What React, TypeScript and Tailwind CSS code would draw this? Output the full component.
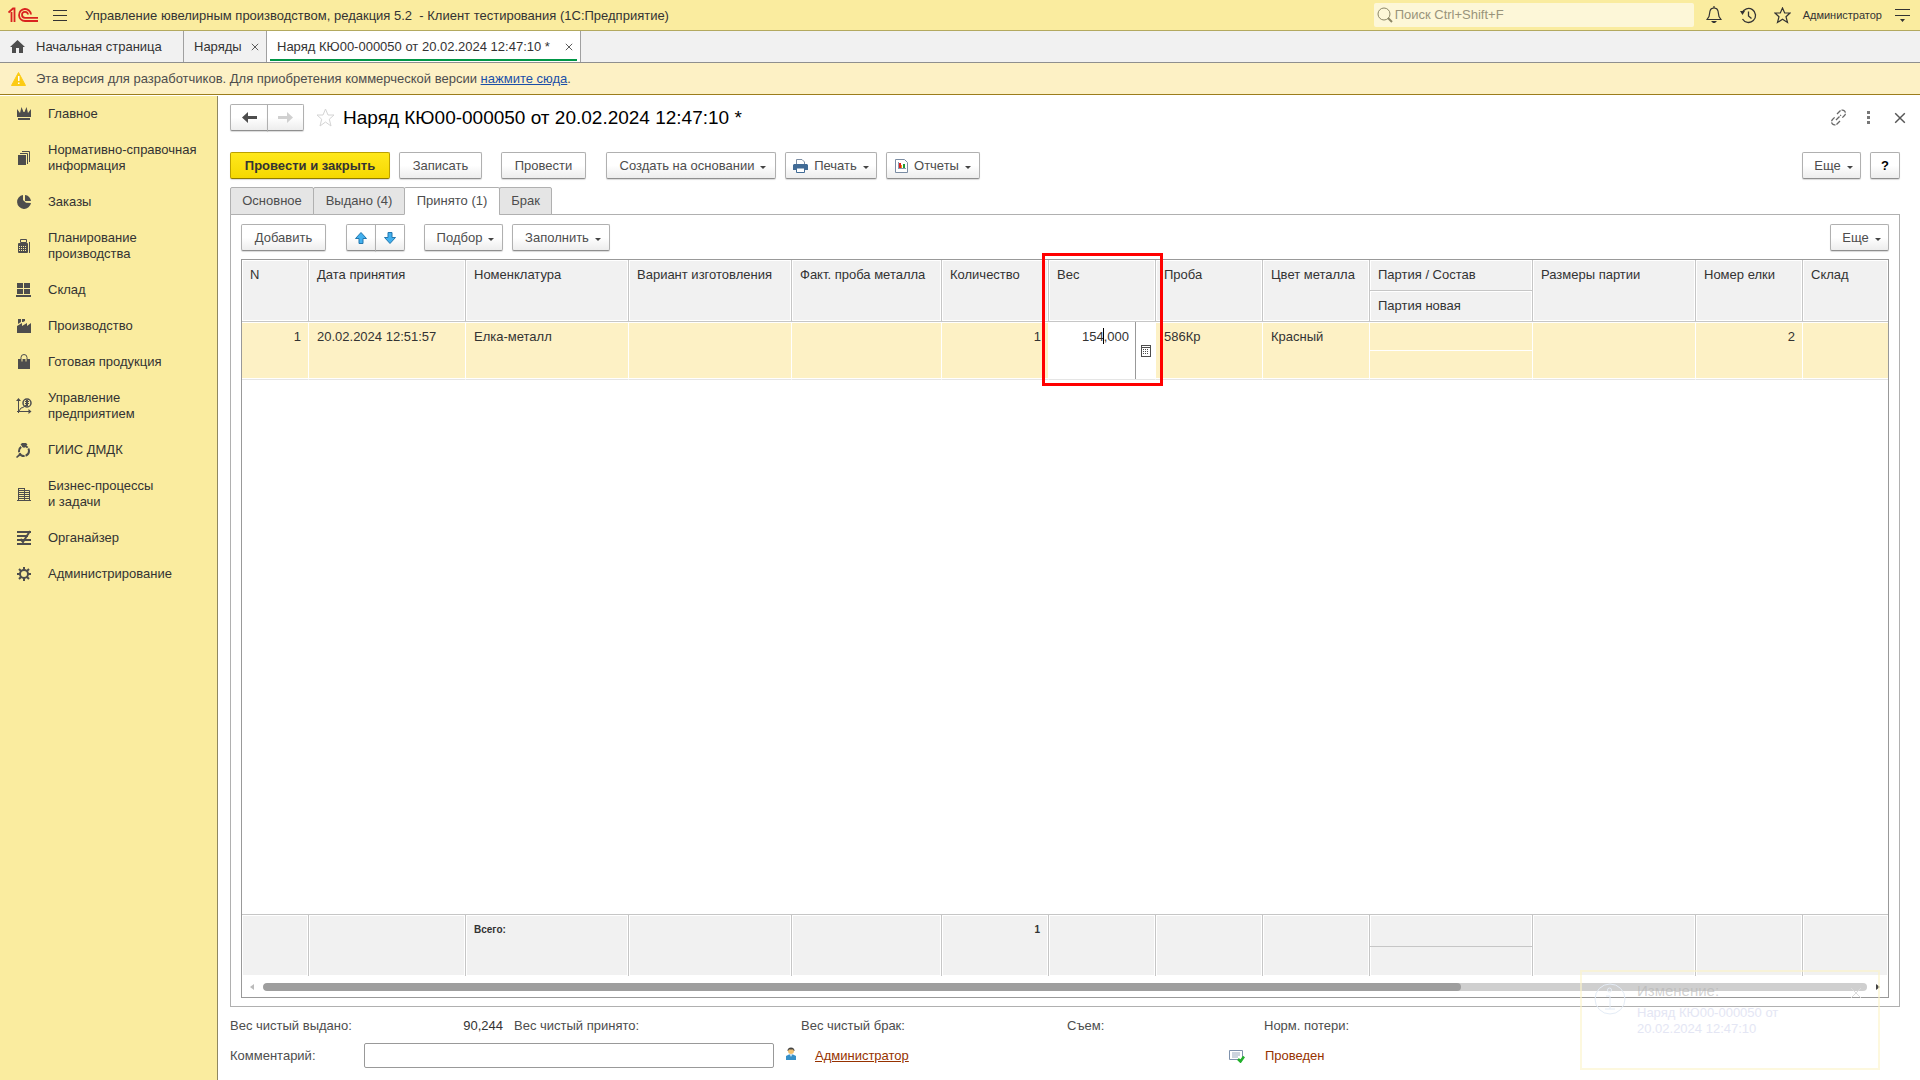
import React, { useState } from 'react';
import clsx from 'clsx';

interface SectionItem {
  label: string;
  icon: React.ReactNode;
}

const sections: SectionItem[] = [
  {
    label: 'Главное',
    icon: <path d="M1 3l3 4 1.500-6 2 5h1l2-5L12 7l3-4v8H1zM2 12h12v2H2z" />,
  },
  {
    label: 'Нормативно-справочная\nинформация',
    icon: (
      <>
        <path d="M2 5h8v10H2z" />
        <path d="M4 3.500h7.500V14M6 1.500h7.500V12" fill="none" stroke="currentColor" />
      </>
    ),
  },
  {
    label: 'Заказы',
    icon: (
      <>
        <path d="M7 1a7 7 0 1 0 8 8l-5-.2L7 6z" />
        <path d="M9 1a6.500 6.500 0 0 1 6 6H9z" />
      </>
    ),
  },
  {
    label: 'Планирование\nпроизводства',
    icon: (
      <>
        <path d="M4.500 1.500h6v3h-6zM2.500 5.500h9v9h-9z" fill="none" stroke="currentColor" />
        <path d="M3 6h8v2H3zM3 9h8v1H3zM3 11h8v1H3zM3 13h8v1H3zM4 7h1v7H4zM6 7h1v7H6zM8 7h1v7H8zM10 7h1v7h-1zM13 4h1v11h-1z" />
      </>
    ),
  },
  {
    label: 'Склад',
    icon: <path d="M1 1h6v5H1zM8 1h6v5H8zM1 7h6v5H1zM8 7h6v5H8zM0 13h15v2H0z" />,
  },
  {
    label: 'Производство',
    icon: <path d="M1 8l5-3v3l5-3v3l4-3v10H1zM2 1h3v3L2 6zM6 1h3v2L7 4H6z" />,
  },
  {
    label: 'Готовая продукция',
    icon: (
      <>
        <path d="M2 5h12v10H2z" />
        <path d="M5 7V3.500a3 3 0 0 1 6 0V7" fill="none" stroke="currentColor" />
        <path d="M5.500 5h1v2.500h-1zM9.500 5h1v2.500h-1z" fill="#faec9f" />
      </>
    ),
  },
  {
    label: 'Управление\nпредприятием',
    icon: (
      <>
        <path d="M2.500 15V2M1 13.500h13M3 13l2-3 2-.5 3-2.500" fill="none" stroke="currentColor" />
        <path d="M2.500 0l2.500 3H0zM15.500 13.500l-3 2.500v-5z" />
        <circle cx="11" cy="5" r="4" fill="none" stroke="currentColor" strokeWidth="1.500" />
        <path d="M9 3h4v1H9zM9 5h4v1H9zM10 2h2v6h-2z" />
      </>
    ),
  },
  {
    label: 'ГИИС ДМДК',
    icon: (
      <>
        <circle cx="8" cy="9" r="5" fill="none" stroke="currentColor" strokeWidth="2" strokeDasharray="6 1" />
        <path d="M4.500 2.500L6 1h4l1.500 1.500L8 6zM4 11l1 2-4 3-1-1z" />
      </>
    ),
  },
  {
    label: 'Бизнес-процессы\nи задачи',
    icon: (
      <path
        d="M2.500 2v12M8.500 2v12M2 2.500h7M9 4.500h4.500v10M1 14.500h14M3 4.500h5M3 6.500h5M3 8.500h5M3 10.500h5M3 12.500h5M9 6.500h4M9 8.500h4M9 10.500h4M9 12.500h4"
        fill="none"
        stroke="currentColor"
      />
    ),
  },
  {
    label: 'Органайзер',
    icon: (
      <>
        <path d="M1 1h14v2H1zM1 5h11v2H1zM1 9h14v2H1zM1 13h14v2H1z" />
        <path d="M14 1L7 12 4.500 9" fill="none" stroke="currentColor" strokeWidth="2" />
      </>
    ),
  },
  {
    label: 'Администрирование',
    icon: (
      <>
        <circle cx="8" cy="8" r="4" fill="none" stroke="currentColor" strokeWidth="2" />
        <path
          d="M8 1v3M8 12v3M1 8h3M12 8h3M3 3l2 2M11 11l2 2M13 3l-2 2M5 11l-2 2"
          stroke="currentColor"
          strokeWidth="2"
        />
      </>
    ),
  },
];

const formTabs = ['Основное', 'Выдано (4)', 'Принято (1)', 'Брак'];

interface Column {
  title: string;
  width?: number;
  value?: string;
  total?: string;
  right?: boolean;
  subtitle?: string;
}

const columns: Column[] = [
  { title: 'N', width: 67, value: '1', right: true },
  { title: 'Дата принятия', width: 157, value: '20.02.2024 12:51:57' },
  { title: 'Номенклатура', width: 163, value: 'Елка-металл', total: 'Всего:' },
  { title: 'Вариант изготовления', width: 163 },
  { title: 'Факт. проба металла', width: 150 },
  { title: 'Количество', width: 107, value: '1', total: '1', right: true },
  { title: 'Вес', width: 107 },
  { title: 'Проба', width: 107, value: '586Кр' },
  { title: 'Цвет металла', width: 107, value: 'Красный' },
  { title: 'Партия / Состав', width: 163, subtitle: 'Партия новая' },
  { title: 'Размеры партии', width: 163 },
  { title: 'Номер елки', width: 107, value: '2', right: true },
  { title: 'Склад' },
];

const Caret = () => <span className="mt-1 border-x-[3px] border-t-[3px] border-x-transparent border-t-[#444]" />;

interface ToolButtonProps {
  children: React.ReactNode;
  className?: string;
  menu?: boolean;
  label?: string;
}

const ToolButton: React.FC<ToolButtonProps> = ({ children, className, menu = false, label }) => (
  <button
    type="button"
    aria-label={label}
    className={clsx(
      'flex h-[27px] shrink-0 items-center justify-center gap-[6px] whitespace-nowrap rounded-xs border border-[#b0b0b0] border-b-[#8f8f8f] bg-linear-to-b from-white from-50% to-[#ededed] shadow-[0_1px_1px_#00000026]',
      className,
    )}
  >
    {children}
    {menu && <Caret />}
  </button>
);

const Logo = () => (
  <svg width="30" height="16" viewBox="0 0 30 16" fill="none" stroke="#d9231f" className="shrink-0">
    <path d="M.5 5.500L5 1.500h1.500V15M3.500 5v10" strokeWidth="1.800" />
    <path d="M23 7.500A6 6 0 1 0 17 14h13" strokeWidth="1.800" />
    <path d="M20 7.500A3 3 0 1 0 17 10.800h13" strokeWidth="1.800" />
  </svg>
);

const TopBar = () => (
  <header className="flex h-[31px] shrink-0 items-center border-b border-[#b3a95f] bg-[#faec9f] pl-2 text-[#333]">
    <Logo />
    <button type="button" aria-label="Меню" className="ml-[15px] flex w-[14px] flex-col gap-1">
      <span className="h-px bg-[#333]" />
      <span className="h-px bg-[#333]" />
      <span className="h-px bg-[#333]" />
    </button>
    <h1 className="ml-[18px] whitespace-pre pt-px">
      Управление ювелирным производством, редакция 5.2{'  '}- Клиент тестирования (1С:Предприятие)
    </h1>
    <label className="ml-auto flex h-6 w-[320px] items-center rounded-xs bg-[#fdf7d8] pl-[3px]">
      <svg width="16" height="16" viewBox="0 0 16 16" fill="none" stroke="#8c8767">
        <circle cx="7" cy="7" r="6" />
        <path d="M11 11l4 4" strokeWidth="2" />
      </svg>
      <input
        type="search"
        aria-label="Поиск"
        placeholder="Поиск Ctrl+Shift+F"
        className="min-w-0 flex-1 bg-transparent pl-[2px] outline-none placeholder:text-[#99947b]"
      />
    </label>
    <button type="button" aria-label="Уведомления" className="ml-3">
      <svg width="16" height="18" viewBox="0 0 16 18" fill="none" stroke="currentColor" strokeWidth="1.200">
        <path d="M1 13.500l2-3 1-5.500C4.500 2.500 6 2 8 2s3.500.5 4 3l1 5.500 2 3z" />
        <path d="M8 0v2" />
        <path d="M5 15h6l-2 2H7z" fill="currentColor" stroke="none" />
      </svg>
    </button>
    <button type="button" aria-label="История" className="ml-[18px]">
      <svg width="17" height="17" viewBox="0 0 17 17" fill="none" stroke="currentColor" strokeWidth="1.300">
        <path d="M2 6a7 7 0 1 1 .5 6M8.500 4.500V9l3 2.500" />
        <path d="M0 4l5 0-2.500 4z" fill="currentColor" stroke="none" />
      </svg>
    </button>
    <button type="button" aria-label="Избранное" className="ml-[17px]">
      <svg width="17" height="17" viewBox="0 0 17 17" fill="none" stroke="currentColor" strokeWidth="1.200">
        <path d="M8.500 1l2.200 5H16l-4 3.700L13.500 15.500l-5-3.300-5 3.300L5 9.700 1 6h5.300z" />
      </svg>
    </button>
    <button type="button" className="ml-3 text-[11px]">
      Администратор
    </button>
    <button type="button" aria-label="Сервис" className="mr-[10px] ml-[13px]">
      <svg width="15" height="15" viewBox="0 0 15 15" fill="currentColor">
        <path d="M0 1h15v1H0zM0 7h15v1H0zM5 11h5l-2.500 3z" />
      </svg>
    </button>
  </header>
);

const WindowTabs = () => (
  <nav className="flex h-8 shrink-0 border-b border-[#8f8f8f] bg-[#f1f1f1] text-[#333]">
    <button type="button" className="flex w-[184px] items-center border-r border-[#a0a0a0] pl-[10px]">
      <svg width="15" height="13" viewBox="0 0 15 13" fill="#4d4d4d">
        <path d="M7.500 0L15 7h-2v6H9V8H6v5H2V7H0z" />
      </svg>
      <span className="ml-[11px]">Начальная страница</span>
    </button>
    <div className="flex w-[83px] items-center justify-between border-r border-[#a0a0a0] pl-[10px] pr-[7px]">
      <button type="button">Наряды</button>
      <CloseCross size={8} label="Закрыть Наряды" />
    </div>
    <div className="flex w-[314px] border-r border-[#a0a0a0] bg-white px-[3px]">
      <div className="mb-px flex flex-1 items-center justify-between border-b-2 border-[#009646] pt-[3px] pl-[7px] pr-[4px]">
        <button type="button">Наряд КЮ00-000050 от 20.02.2024 12:47:10 *</button>
        <CloseCross size={8} label="Закрыть Наряд" />
      </div>
    </div>
  </nav>
);

const CloseCross: React.FC<{ size: number; label: string }> = ({ size, label }) => (
  <button type="button" aria-label={label}>
    <svg width={size} height={size} viewBox="0 0 10 10" stroke="#555" strokeWidth="1.200">
      <path d="M1 1l8 8M9 1L1 9" />
    </svg>
  </button>
);

const VersionNotice = () => (
  <div className="flex h-8 shrink-0 items-center border-b border-[#9c7d1c] bg-[#fdf1c5] pl-[11px] text-[#4d4d4d]">
    <svg width="15" height="14" viewBox="0 0 15 14">
      <path d="M7.500 0.500L14.500 13.500H0.500z" fill="#fccb14" stroke="#fccb14" strokeLinejoin="round" />
      <path d="M7 4h1.500v5H7zM7 10.500h1.500V12H7z" fill="#fff" />
    </svg>
    <p className="ml-[10px]">
      Эта версия для разработчиков. Для приобретения коммерческой версии{' '}
      <a href="#buy" className="text-[#1a4fa8] underline">
        нажмите сюда
      </a>
      .
    </p>
  </div>
);

const Sidebar = () => (
  <nav className="mt-px w-[218px] shrink-0 border-r border-[#8f8760] bg-[#faec9f] text-[#333]">
    {sections.map((item) => (
      <a key={item.label} href="#section" className="flex items-center py-[10px] pl-4 leading-4">
        <svg width="16" height="16" viewBox="0 0 16 16" fill="currentColor" className="shrink-0 text-[#4d4d4d]">
          {item.icon}
        </svg>
        <span className="ml-4 whitespace-pre-line">{item.label}</span>
      </a>
    ))}
  </nav>
);

const FormHeader = () => (
  <div className="flex items-center pr-[14px]">
    <ToolButton label="Назад" className="h-[25px] w-[38px] rounded-r-none">
      <svg width="15" height="11" viewBox="0 0 15 11" fill="#4d4d4d">
        <path d="M6 0v4h9v3H6v4L0 5.500z" />
      </svg>
    </ToolButton>
    <ToolButton label="Вперед" className="-ml-px h-[25px] w-[37px] rounded-l-none">
      <svg width="15" height="11" viewBox="0 0 15 11" fill="#d0d0d0">
        <path d="M9 0v4H0v3h9v4l6-5.500z" />
      </svg>
    </ToolButton>
    <button type="button" aria-label="В избранное" className="ml-3">
      <svg width="19" height="19" viewBox="0 0 19 19" fill="none" stroke="#d4d4d4">
        <path d="M9.500 1l2.500 6h6l-4.700 4.200L15 18l-5.500-4L4 18l1.700-6.800L1 7h6z" />
      </svg>
    </button>
    <h2 className="ml-2 text-[19px] leading-[22px] text-black">Наряд КЮ00-000050 от 20.02.2024 12:47:10 *</h2>
    <button type="button" aria-label="Получить ссылку" className="ml-auto">
      <svg width="17" height="17" viewBox="0 0 17 17" fill="none" stroke="#666" strokeWidth="1.300">
        <path d="M7 5l3-3a3 3 0 0 1 4.500 4.500L12 9M10 12l-3 3a3 3 0 0 1-4.500-4.500L5 8M6 11l5-5" strokeDasharray="5 1" />
      </svg>
    </button>
    <button type="button" aria-label="Дополнительно" className="ml-5 flex flex-col gap-[2px]">
      <span className="size-[3px] bg-[#777]" />
      <span className="size-[3px] bg-[#777]" />
      <span className="size-[3px] bg-[#777]" />
    </button>
    <span className="ml-6 flex">
      <CloseCross size={12} label="Закрыть" />
    </span>
  </div>
);

const CommandBar = () => (
  <div className="mt-[21px] flex pr-5 text-[#4d4d4d]">
    <button
      type="button"
      className="h-[27px] w-[160px] rounded-xs border border-[#bba000] border-b-[#8f7a00] bg-linear-to-b from-[#ffe81a] to-[#f5d800] font-bold text-[#333] shadow-[0_1px_1px_#00000026]"
    >
      Провести и закрыть
    </button>
    <ToolButton className="ml-[9px] w-[83px]">Записать</ToolButton>
    <ToolButton className="ml-[19px] w-[85px]">Провести</ToolButton>
    <ToolButton menu className="ml-5 w-[170px] pl-1">
      Создать на основании
    </ToolButton>
    <ToolButton menu className="ml-[9px] w-[92px]">
      <svg width="15" height="14" viewBox="0 0 15 14">
        <path d="M3.500 5V.5H9L11.500 3v2" fill="#fff" stroke="#7a8ca3" />
        <path d="M1 5h13l1 1v5h-3V9H3v2H0V6z" fill="#416b96" />
        <path d="M3.500 9h8v4.500h-8z" fill="#fff" stroke="#416b96" />
      </svg>
      Печать
    </ToolButton>
    <ToolButton menu className="ml-[9px] w-[94px]">
      <svg width="13" height="14" viewBox="0 0 13 14">
        <path d="M.5.5h9l3 3v10H.5z" fill="#fff" stroke="#7a8ca3" />
        <path d="M3 3h1v7H3zM3 9h8v1H3z" fill="#8a9bb0" />
        <path d="M4 4h2v5H4z" fill="#e02020" />
        <path d="M6 6h1v3H6z" fill="#e8a010" />
        <path d="M8 5h2v4H8z" fill="#1f9a35" />
      </svg>
      Отчеты
    </ToolButton>
    <ToolButton menu className="ml-auto w-[59px] pl-1">
      Еще
    </ToolButton>
    <ToolButton className="ml-[9px] w-[30px] font-bold text-black">?</ToolButton>
  </div>
);

const tabWidths = ['w-[84px]', 'w-[92px]', 'w-[96px]', 'w-[53px]'];

const WeightEditor = () => {
  const [weight, setWeight] = useState('154,000');

  return (
    <div className="flex h-[57px] bg-white">
      <input
        aria-label="Вес"
        value={weight}
        onChange={(e) => setWeight(e.target.value)}
        className="mt-1 h-5 w-0 flex-1 pr-[6px] text-right text-[#333] outline-none"
      />
      <button
        type="button"
        aria-label="Калькулятор"
        className="flex w-5 items-center justify-center border-l border-[#999]"
      >
        <svg width="10" height="12" viewBox="0 0 10 12" fill="#4d4d4d">
          <path d="M0 0h10v12H0zM1 1v1h8V1zM1 3v8h8V3z" fillRule="evenodd" />
          <path d="M2 4h1v1H2zM4 4h1v1H4zM6 4h1v1H6zM2 6h1v1H2zM4 6h1v1H4zM6 6h1v1H6zM2 8h1v1H2zM4 8h1v1H4zM6 8h1v1H6z" />
        </svg>
      </button>
      {/* text cursor */}
      <span className="absolute top-[6px] left-[54px] h-4 w-px bg-black" />
      <span className="pointer-events-none absolute -top-[69px] -left-[7px] z-10 h-[133px] w-[121px] border-[3px] border-[#ff0000]" />
    </div>
  );
};

const AcceptedTable = () => (
  <div className="mx-[10px] mt-2 mb-2 flex min-h-0 flex-1 flex-col border border-[#999]">
    <div className="min-h-0 flex-1">
      <table className="h-full w-full table-fixed border-separate border-spacing-0 leading-4 text-[#333]">
        <colgroup>
          {columns.map((col) => (
            <col key={col.title} style={col.width ? { width: col.width } : undefined} />
          ))}
        </colgroup>
        <thead>
          <tr>
            {columns.map((col) => (
              <th
                key={col.title}
                scope="col"
                className="h-[62px] whitespace-nowrap border-r border-b border-[#c6c6c6] p-0 text-left align-top font-normal last:border-r-0"
              >
                <div className="h-[61px] border border-white bg-[#f1f1f1]">
                  {col.subtitle ? (
                    <>
                      <div className="-mx-px h-[30px] border-b border-[#c6c6c6] pt-[6px] pl-2">{col.title}</div>
                      <div className="border-t border-white pt-[6px] pl-[7px]">{col.subtitle}</div>
                    </>
                  ) : (
                    <div className="pt-[6px] pl-[7px]">{col.title}</div>
                  )}
                </div>
              </th>
            ))}
          </tr>
        </thead>
        <tbody>
          <tr>
            {columns.map((col) => (
              <td
                key={col.title}
                className={clsx(
                  'h-[58px] border-r border-b border-r-white border-b-[#e5e5e5] p-0 align-top last:border-r-0',
                  col.title === 'Вес' && 'relative',
                )}
              >
                {col.title === 'Вес' ? (
                  <WeightEditor />
                ) : (
                  <div className="h-[57px] border-y border-white bg-[#fdf1c5]">
                    {col.subtitle ? (
                      <div className="h-[28px] border-b border-white" />
                    ) : (
                      <div className={clsx('pt-[6px] pr-[7px] pl-2', col.right && 'text-right')}>{col.value}</div>
                    )}
                  </div>
                )}
              </td>
            ))}
          </tr>
          <tr>
            <td colSpan={columns.length} className="p-0" />
          </tr>
        </tbody>
        <tfoot>
          <tr>
            {columns.map((col) => (
              <td
                key={col.title}
                className="h-[62px] border-t border-r border-[#c6c6c6] p-0 align-top text-[10px] last:border-r-0"
              >
                <div className="h-[61px] border border-white bg-[#f1f1f1]">
                  {col.subtitle ? (
                    <div className="-mx-px h-[31px] border-b border-[#c6c6c6]" />
                  ) : (
                    <div className={clsx('px-[7px] pt-[6px] font-bold', col.right && 'text-right')}>{col.total}</div>
                  )}
                </div>
              </td>
            ))}
          </tr>
        </tfoot>
      </table>
    </div>
    <div className="flex h-[21px] shrink-0 items-center px-2">
      <span className="border-y-[3px] border-r-[4px] border-y-transparent border-r-[#bbb]" />
      <div className="mr-[9px] ml-[9px] h-2 flex-1 overflow-hidden rounded-full bg-[#cfcfcf]">
        <div className="h-full w-[calc(75%-5px)] rounded-full bg-[#9e9e9e]" />
      </div>
      <span className="border-y-[3px] border-l-[4px] border-y-transparent border-l-[#444]" />
    </div>
  </div>
);

const FormFooter = () => (
  <div className="mt-[9px] h-[64px] shrink-0 text-[#4d4d4d]">
    <div className="flex h-5 items-center whitespace-nowrap">
      <span className="w-[204px]">Вес чистый выдано:</span>
      <output className="w-[69px] text-right text-[#333]">90,244</output>
      <span className="ml-[11px] w-[287px]">Вес чистый принято:</span>
      <span className="w-[266px]">Вес чистый брак:</span>
      <span className="w-[197px]">Съем:</span>
      <span>Норм. потери:</span>
    </div>
    <div className="mt-[7px] flex h-[25px] items-center">
      <label htmlFor="comment" className="w-[134px]">
        Комментарий:
      </label>
      <input id="comment" type="text" className="h-[25px] w-[410px] rounded-xs border border-[#999] bg-white px-2" />
      <svg width="10" height="13" viewBox="0 0 10 13" className="mb-1 ml-3">
        <circle cx="5" cy="4" r="3" fill="#f0c070" />
        <path d="M1.500 4a3.500 3.500 0 0 1 7 0H8L7 2.500H3L2 4z" fill="#444" />
        <path d="M0 13V9l3-1.500h4L10 9v4z" fill="#3790c8" />
        <path d="M4 7.500h2L5 10z" fill="#fff" />
      </svg>
      <a href="#author" className="ml-[19px] w-[414px] text-[#963200] underline">
        Администратор
      </a>
      <svg width="16" height="14" viewBox="0 0 16 14" fill="none">
        <path d="M.5 1.500h13v9H.5z" fill="#fff" stroke="#7f92ad" />
        <path d="M3 4h8M3 6h8M3 8h6" stroke="#9aa9bd" />
        <path d="M9 10l2.500 2.500L15 7.500" stroke="#22b02c" strokeWidth="2.500" />
      </svg>
      <span className="ml-5 text-[#963200]">Проведен</span>
    </div>
  </div>
);

const ChangeToast = () => (
  <div className="pointer-events-none absolute right-10 bottom-[10px] flex h-[100px] w-[300px] border-2 border-[#fbf3c8]/60 pt-[11px] pl-3">
    <svg width="32" height="32" viewBox="0 0 32 32" fill="none" stroke="#e4ecf6">
      <circle cx="16" cy="16" r="15" />
      <circle cx="15.500" cy="7" r="2" />
      <path d="M12 13h4v13M11 26h10" />
    </svg>
    <div className="ml-[11px]">
      <div className="text-[15px] leading-4 text-[#b4b4b4]/60">Изменение:</div>
      <div className="mt-[6px] w-[160px] leading-4 text-[#e4e6f4]">Наряд КЮ00-000050 от 20.02.2024 12:47:10</div>
    </div>
    <svg width="10" height="10" viewBox="0 0 10 10" stroke="#dcdcdc" className="mt-[5px] ml-[54px]">
      <path d="M0 0l10 10M10 0L0 10" />
    </svg>
  </div>
);

export default function App() {
  const [activeTab, setActiveTab] = useState('Принято (1)');

  return (
    <div className="relative flex h-screen flex-col overflow-hidden bg-white font-['Liberation_Sans',Arial,sans-serif] text-[13px]">
      <TopBar />
      <WindowTabs />
      <VersionNotice />
      <div className="flex min-h-0 flex-1">
        <Sidebar />
        <main className="flex min-w-0 flex-1 flex-col pt-[9px] pl-3">
          <FormHeader />
          <CommandBar />
          <div role="tablist" className="mt-2 flex text-[#4d4d4d]">
            {formTabs.map((tab, i) => (
              <button
                key={tab}
                type="button"
                role="tab"
                aria-selected={tab === activeTab}
                onClick={() => setActiveTab(tab)}
                className={clsx(
                  'relative -mr-px h-[28px] rounded-t-xs border border-[#b0b0b0]',
                  tabWidths[i],
                  tab === activeTab ? 'border-b-white bg-white' : 'bg-[#e5e5e5]',
                )}
              >
                {tab}
              </button>
            ))}
          </div>
          <section className="-mt-px mr-5 flex min-h-0 flex-1 flex-col border border-[#b0b0b0]">
            <div className="mx-[10px] mt-[9px] flex text-[#4d4d4d]">
              <ToolButton className="w-[85px]">Добавить</ToolButton>
              <ToolButton label="Вверх" className="ml-5 w-[30px] rounded-r-none">
                <svg width="12" height="12" viewBox="0 0 12 12" fill="#42b0ee" stroke="#2377ae">
                  <path d="M6 .5L11.500 6.500H8v5H4v-5H.5z" />
                </svg>
              </ToolButton>
              <ToolButton label="Вниз" className="-ml-px w-[30px] rounded-l-none">
                <svg width="12" height="12" viewBox="0 0 12 12" fill="#42b0ee" stroke="#2377ae">
                  <path d="M6 11.500L.5 5.500H4v-5h4v5h3.500z" />
                </svg>
              </ToolButton>
              <ToolButton menu className="ml-[19px] w-[79px] pl-1">
                Подбор
              </ToolButton>
              <ToolButton menu className="ml-[9px] w-[98px] pl-1">
                Заполнить
              </ToolButton>
              <ToolButton menu className="ml-auto w-[59px] pl-1">
                Еще
              </ToolButton>
            </div>
            <AcceptedTable />
          </section>
          <FormFooter />
        </main>
      </div>
      <ChangeToast />
    </div>
  );
}
